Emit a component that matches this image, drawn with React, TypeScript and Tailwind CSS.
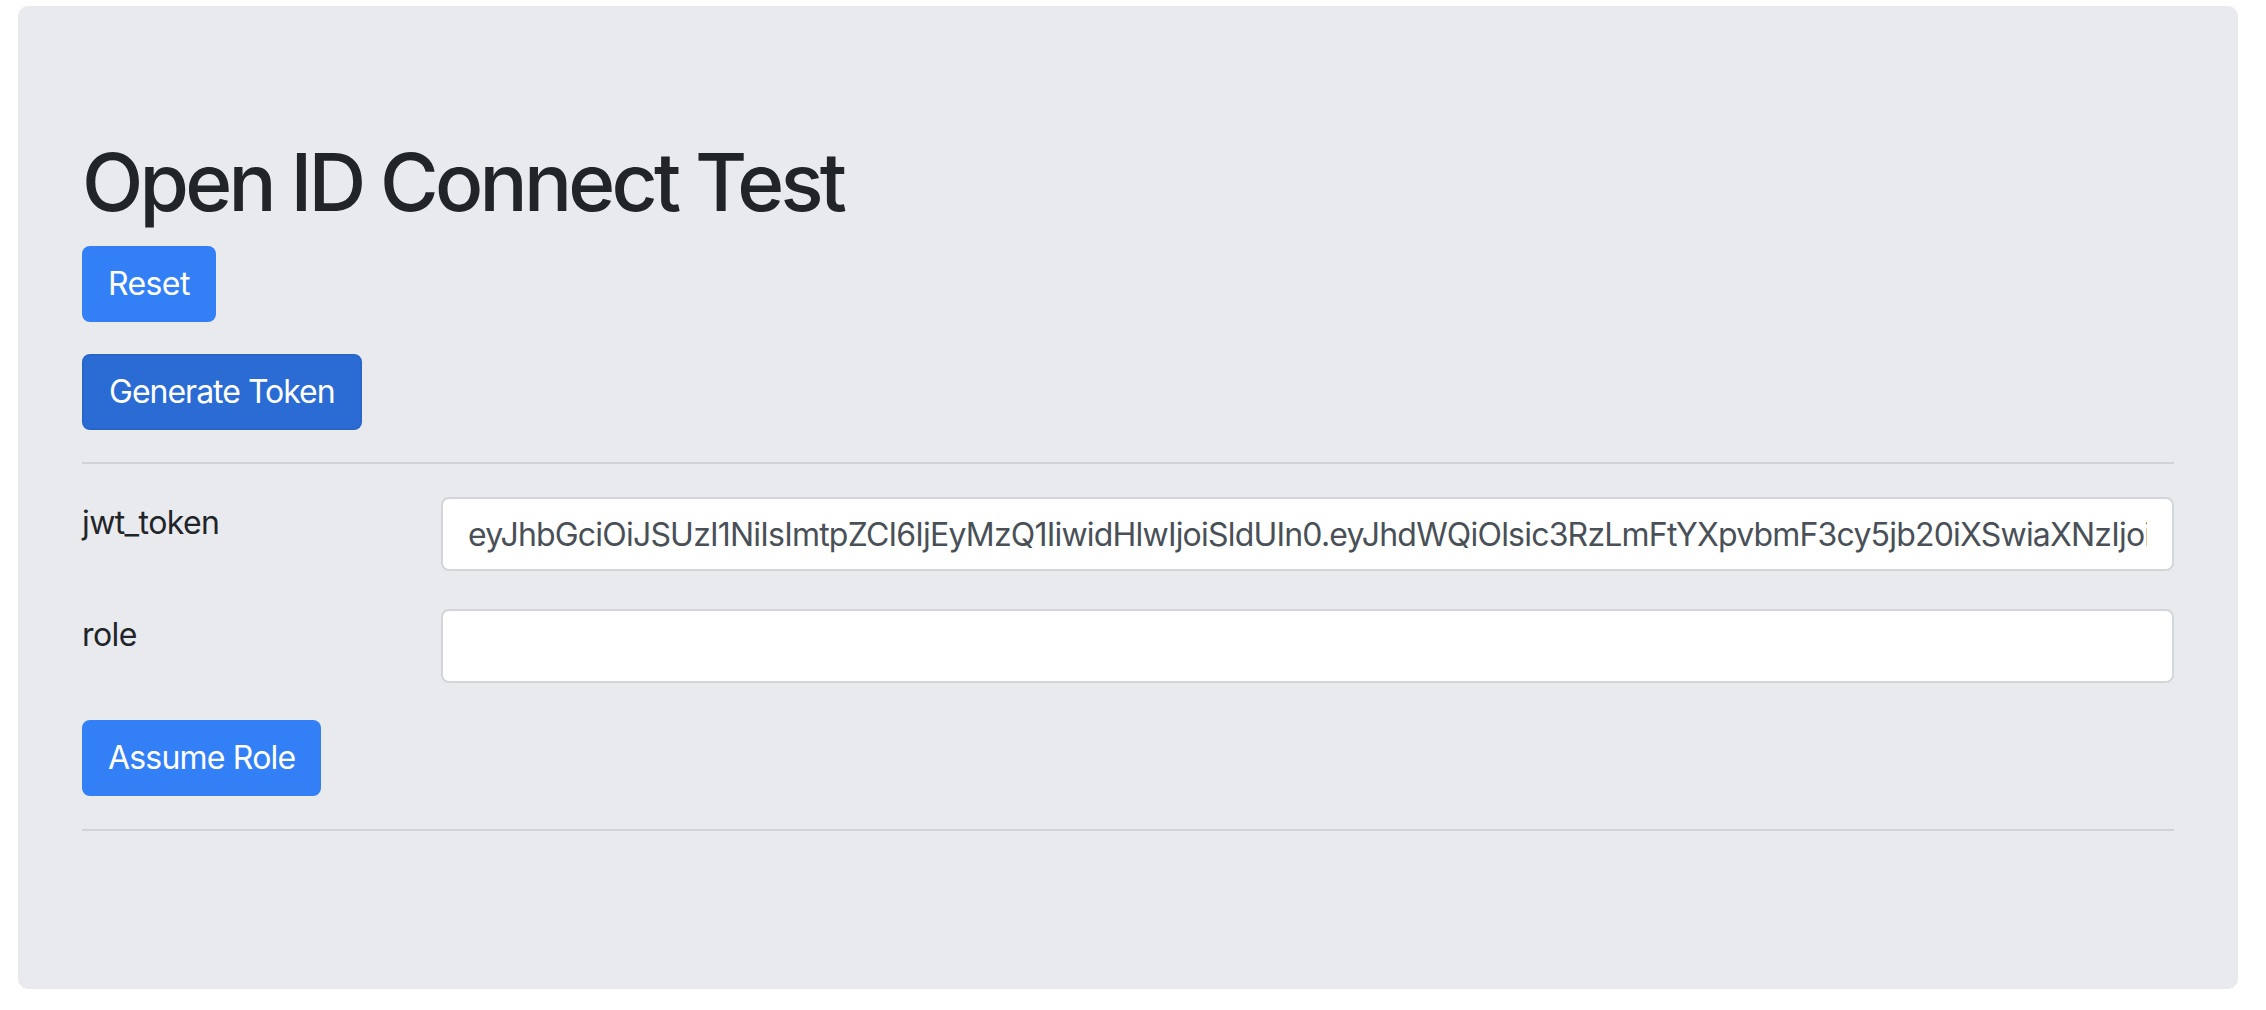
import { useState } from 'react'

const TOKEN =
  'eyJhbGciOiJSUzI1NiIsImtpZCI6IjEyMzQ1IiwidHlwIjoiSldUIn0.eyJhdWQiOlsic3RzLmFtYXpvbmF3cy5jb20iXSwiaXNzIjoiaHR0cHM6Ly9leGFtcGxlLmNvbSIsInN1YiI6InRlc3QtdXNlciJ9.c2lnbmF0dXJl'

const App = () => {
  const [token, setToken] = useState<string>(TOKEN)
  const [role, setRole] = useState<string>('')

  const handleReset = () => {
    setToken('')
    setRole('')
  }

  const handleGenerate = () => {
    setToken(TOKEN)
  }

  const handleAssume = () => {
    console.log('assume role', role)
  }

  return (
    <div className="min-h-screen bg-white pt-[6px] pl-[18px] pr-[28px] font-['Inter',sans-serif]">
      <div className="bg-[#e9eaee] rounded-[10px] px-[64px] pt-[128px] pb-[158px]">
        <h1 className="text-[80px] leading-[96px] font-medium text-[#212529] mb-[16px] tracking-[-3.75px]">
          Open ID Connect Test
        </h1>
        <div className="mb-[32px]">
          <button
            onClick={handleReset}
            className="h-[76px] px-[26px] rounded-[8px] bg-[#3380f6] text-white text-[32px] leading-[48px] tracking-[-0.6px]"
          >
            Reset
          </button>
        </div>
        <div>
          <button
            onClick={handleGenerate}
            className="h-[76px] px-[25px] rounded-[8px] bg-[#2a6bd4] border-2 border-[#2866cc] text-white text-[32px] leading-[48px] tracking-[-1px]"
          >
            Generate Token
          </button>
        </div>
        <hr className="mt-[32px] mb-[33px] border-t-2 border-[#d2d3d8]" />
        <div className="grid grid-cols-[359px_1fr] gap-y-[38px]">
          <label className="text-[32px] leading-[48px] text-[#212529] pt-[2px] tracking-[-0.6px]">
            jwt_token
          </label>
          <input
            value={token}
            onChange={(e) => setToken(e.target.value)}
            className="h-[74px] w-full bg-white border-2 border-[#d2d5d9] rounded-[8px] px-[25px] text-[32px] text-[#495057] outline-none tracking-[-0.8px]"
          />
          <label className="text-[32px] leading-[48px] text-[#212529] pt-[2px] tracking-[-0.6px]">
            role
          </label>
          <input
            value={role}
            onChange={(e) => setRole(e.target.value)}
            className="h-[74px] w-full bg-white border-2 border-[#d2d5d9] rounded-[8px] px-[25px] text-[32px] text-[#495057] outline-none tracking-[-0.8px]"
          />
        </div>
        <div className="mt-[37px]">
          <button
            onClick={handleAssume}
            className="h-[76px] px-[26px] rounded-[8px] bg-[#3380f6] text-white text-[32px] leading-[48px] tracking-[-0.8px]"
          >
            Assume Role
          </button>
        </div>
        <hr className="mt-[33px] border-t-2 border-[#d2d3d8]" />
      </div>
    </div>
  )
}

export default App
